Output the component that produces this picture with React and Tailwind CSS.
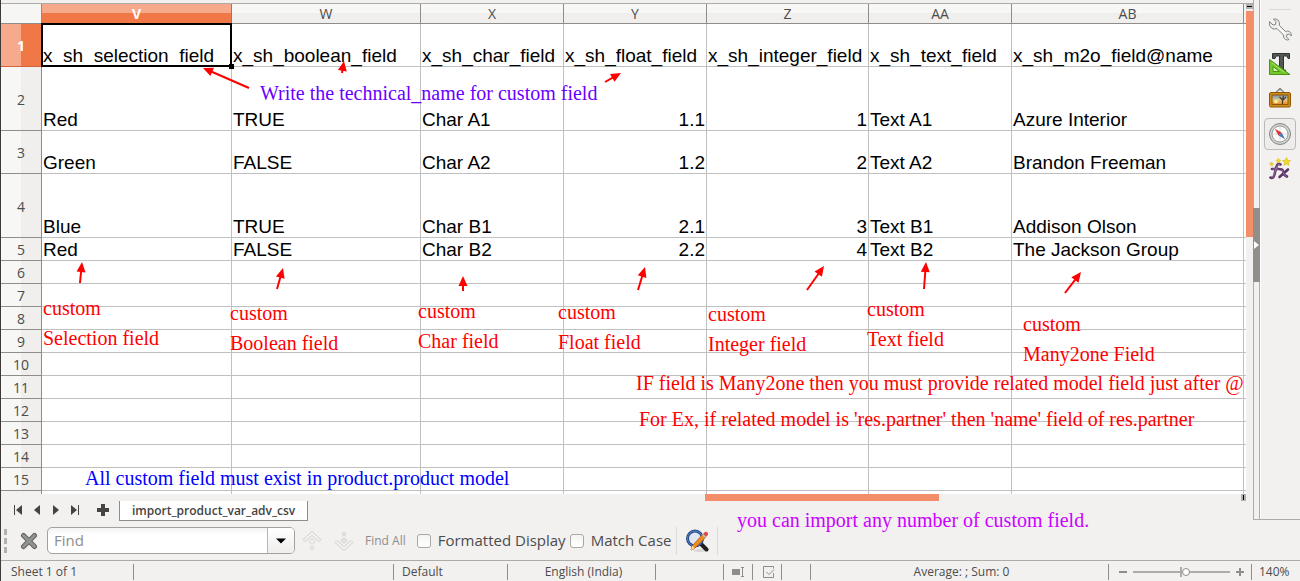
import React, { useState } from 'react';
import clsx from 'clsx';

const columns = [
  { name: 'V', width: 'w-[190px]' },
  { name: 'W', width: 'w-[189px]' },
  { name: 'X', width: 'w-[143px]' },
  { name: 'Y', width: 'w-[143px]', numeric: true },
  { name: 'Z', width: 'w-[162px]', numeric: true },
  { name: 'AA', width: 'w-[143px]' },
  { name: 'AB', width: 'w-[232px]' },
];

const rows = [
  {
    height: 'h-[43px]',
    cells: [
      'x_sh_selection_field',
      'x_sh_boolean_field',
      'x_sh_char_field',
      'x_sh_float_field',
      'x_sh_integer_field',
      'x_sh_text_field',
      'x_sh_m2o_field@name',
    ],
  },
  { height: 'h-16', cells: ['Red', 'TRUE', 'Char A1', '1.1', '1', 'Text A1', 'Azure Interior'] },
  { height: 'h-[43px]', cells: ['Green', 'FALSE', 'Char A2', '1.2', '2', 'Text A2', 'Brandon Freeman'] },
  { height: 'h-16', cells: ['Blue', 'TRUE', 'Char B1', '2.1', '3', 'Text B1', 'Addison Olson'] },
  { height: 'h-[23px]', cells: ['Red', 'FALSE', 'Char B2', '2.2', '4', 'Text B2', 'The Jackson Group'] },
  ...Array.from({ length: 10 }, () => ({ height: 'h-[23px]', cells: ['', '', '', '', '', '', ''] })),
];

// Notes pinned freely on top of the sheet
const notes = [
  { place: 'left-[260px] top-[78px]', color: 'text-[#6a00ff]', lines: ['Write the technical_name for custom field'] },
  { place: 'left-[43px] top-[293px]', color: 'text-[#ff0000]', lines: ['custom', 'Selection field'] },
  { place: 'left-[230px] top-[298px]', color: 'text-[#ff0000]', lines: ['custom', 'Boolean field'] },
  { place: 'left-[418px] top-[296px]', color: 'text-[#ff0000]', lines: ['custom', 'Char field'] },
  { place: 'left-[558px] top-[297px]', color: 'text-[#ff0000]', lines: ['custom', 'Float field'] },
  { place: 'left-[708px] top-[299px]', color: 'text-[#ff0000]', lines: ['custom', 'Integer field'] },
  { place: 'left-[867px] top-[294px]', color: 'text-[#ff0000]', lines: ['custom', 'Text field'] },
  { place: 'left-[1023px] top-[309px]', color: 'text-[#ff0000]', lines: ['custom', 'Many2one Field'] },
  {
    place: 'left-[636px] top-[368px]',
    color: 'text-[#ff0000]',
    lines: ['IF field is Many2one then you must provide related model field just after @'],
  },
  {
    place: 'left-[639px] top-[404px]',
    color: 'text-[#ff0000]',
    lines: ["For Ex, if related model is 'res.partner' then 'name' field of res.partner"],
  },
  { place: 'left-[85px] top-[463px]', color: 'text-[#0000ff]', lines: ['All custom field must exist in product.product model'] },
  { place: 'left-[737px] top-[505px]', color: 'text-[#cc00ff]', lines: ['you can import any number of custom field.'] },
];

// [tail x, tail y, tip x, tip y]
const arrows = [
  [249, 88, 203, 68],
  [342, 73, 344, 61],
  [605, 82, 621, 73],
  [80, 283, 82, 262],
  [277, 289, 283, 268],
  [463, 291, 463, 276],
  [638, 290, 645, 267],
  [807, 290, 824, 266],
  [924, 289, 926, 262],
  [1065, 293, 1081, 272],
];

function Arrow({ x1, y1, x2, y2 }) {
  const length = Math.hypot(x2 - x1, y2 - y1);
  const angle = (Math.atan2(y2 - y1, x2 - x1) * 180) / Math.PI;
  return (
    <g transform={`translate(${x1} ${y1}) rotate(${angle})`} fill="#ff0000">
      <rect x="0" y="-1" width={length - 7} height="2" />
      <path d={`M${length} 0 l-10 -4.5 v9 z`} />
    </g>
  );
}

function Annotations() {
  return (
    <div className="pointer-events-none absolute -left-px top-0 z-20">
      <svg className="max-w-none" width="1246" height="494" aria-hidden="true">
        {arrows.map(([x1, y1, x2, y2]) => (
          <Arrow key={x1} x1={x1} y1={y1} x2={x2} y2={y2} />
        ))}
      </svg>
      {notes.map((note) => (
        <div
          key={note.place}
          className={clsx(
            'absolute whitespace-nowrap font-["Liberation_Serif",serif] text-[20px] leading-[30px]',
            note.place,
            note.color
          )}
        >
          {note.lines.map((line) => (
            <p key={line}>{line}</p>
          ))}
        </div>
      ))}
    </div>
  );
}

function Sheet() {
  return (
    <div className="min-w-0 flex-1 overflow-hidden bg-white">
      <table className="w-full table-fixed border-separate border-spacing-0">
        <thead>
          <tr className="h-5">
            <th className="w-[41px] border-b border-r border-[#8f8d8a] bg-[#f6f6f5] p-0" />
            {columns.map((col, i) => (
              <th
                key={col.name}
                scope="col"
                className={clsx(
                  'border-b border-r p-0 text-[14px] leading-[19px]',
                  col.width,
                  i === 0
                    ? 'border-[#d0653b] bg-linear-to-b from-[#f7a98c] from-50% to-[#f07746] to-50% font-bold text-white'
                    : 'border-[#8f8d8a] bg-linear-to-b from-[#f7f7f5] from-50% to-[#f0efed] to-50% font-normal text-[#4c4c4c]'
                )}
              >
                {col.name}
              </th>
            ))}
            <th className="border-b border-[#8f8d8a] bg-[#f2f1f0] p-0" />
          </tr>
        </thead>
        <tbody>
          {rows.map((row, r) => (
            <tr key={r} className={row.height}>
              <th
                scope="row"
                className={clsx(
                  'border-b border-r px-0 pb-0 pt-0.5 align-middle text-[14px] leading-5',
                  r === 0
                    ? 'border-[#d0653b] bg-linear-to-r from-[#f7a98c] from-50% to-[#f07746] to-50% font-bold text-white'
                    : 'border-[#8f8d8a] bg-linear-to-r from-[#f7f7f5] from-50% to-[#f0efed] to-50% font-normal text-[#4c4c4c]'
                )}
              >
                {r + 1}
              </th>
              {row.cells.map((cell, c) => (
                <td
                  key={columns[c].name}
                  className={clsx(
                    'whitespace-nowrap border-b border-r border-[#c0c0c0] px-px py-0 align-bottom font-["Liberation_Sans",sans-serif] text-[19px] leading-5 text-black',
                    columns[c].numeric && r > 0 && 'text-right',
                    r === 0 && c === 0 && 'relative'
                  )}
                >
                  {cell}
                  {r === 0 && c === 0 && (
                    <span className="absolute -inset-px z-10 border-2 border-black">
                      <span className="absolute -bottom-1 -right-1 size-[5px] bg-black" />
                    </span>
                  )}
                </td>
              ))}
              <td className="border-b border-[#c0c0c0] p-0" />
            </tr>
          ))}
          <tr className="h-[3px]">
            <td className="border-r border-[#8f8d8a] bg-[#f2f1f0] p-0" />
            {columns.map((col) => (
              <td key={col.name} className="border-r border-[#c0c0c0] p-0" />
            ))}
            <td className="p-0" />
          </tr>
        </tbody>
      </table>
    </div>
  );
}

function VerticalScroll() {
  return (
    <div className="flex w-[7px] shrink-0 flex-col bg-[#f2f1f0]">
      <div className="flex h-[5px] items-center justify-center bg-[#b3b1ae]">
        <div className="h-px w-[5px] bg-black" />
      </div>
      <div className="mt-0.5 h-[226px] bg-[#f38e69]" />
    </div>
  );
}

const navIcons = [
  { label: 'First sheet', d: 'M1 0h1v10H1z M9 0v10L3 5z' },
  { label: 'Previous sheet', d: 'M8 0v10L2 5z' },
  { label: 'Next sheet', d: 'M2 0v10l6-5z' },
  { label: 'Last sheet', d: 'M1 0v10l6-5z M8 0h1v10H8z' },
];

function SheetTabs() {
  return (
    <div className="flex h-[27px] items-start">
      <div className="flex w-[704px] shrink-0 items-start">
        <div className="flex w-[118px] items-center pl-3 pt-2.5">
          {navIcons.map((icon) => (
            <button key={icon.label} aria-label={icon.label} className="mr-[9px] w-2.5">
              <svg width="10" height="10" viewBox="0 0 10 10" fill="#454442">
                <path d={icon.d} />
              </svg>
            </button>
          ))}
          <button aria-label="Add sheet" className="ml-2">
            <svg width="12" height="12" viewBox="0 0 12 12" fill="#454442">
              <path d="M4 0h4v4h4v4H8v4H4V8H0V4h4z" />
            </svg>
          </button>
        </div>
        <button className="mt-[7px] h-5 border border-t-0 border-[#8f8d8a] bg-white px-3 text-[12px] font-semibold leading-[19px] text-[#454442]">
          import_product_var_adv_csv
        </button>
      </div>
      <div className="flex h-[7px] flex-1">
        <div className="w-[234px] bg-[#f38e69]" />
        <div className="ml-auto mr-[7px] flex w-[5px] items-center justify-center bg-[#b3b1ae]">
          <div className="h-[5px] w-px bg-black" />
        </div>
      </div>
    </div>
  );
}

function WrenchIcon() {
  return (
    <svg width="24" height="24" viewBox="0 0 24 24">
      <path
        d="M1.5 4.5 Q0.5 9 4 11.5 Q6.500 12.500 9 11.500 L15.500 18 Q15 21 17.500 22.500 Q20 23.500 21 22.500 L18.500 20 L19 17.500 L21.500 17 L23.300 19 Q23.800 16 21.500 14.500 Q19.500 13.500 17.500 14.500 L11.500 8.500 Q12 5 10 3 Q8 1.500 5.500 2 L8 4.800 L7.500 7.500 L5 8 Z"
        fill="#eeeeec"
        stroke="#858783"
        strokeWidth="1"
        strokeLinejoin="round"
      />
      <path d="M9.500 9.500 L17 17" stroke="#fff" strokeWidth="1.200" />
    </svg>
  );
}

function StylesIcon() {
  return (
    <svg width="24" height="24" viewBox="0 0 24 24">
      <path d="M4.500 1.500h17v5h-1.500l-1-2.500h-3.500v14h2v1.500h-8V18h2V4H8L7 6.500H4.500z" fill="#555753" stroke="#2e3436" />
      <path d="M1.500 7.500v15H22z" fill="#73c62e" stroke="#4a9410" strokeLinejoin="round" />
      <path d="M5 14.500v5h6.500z" fill="#d6f5bb" stroke="#4a9410" />
      <path d="M4 11 l12.500 9.500" stroke="#a6e373" strokeWidth="1" />
    </svg>
  );
}

function GalleryIcon() {
  return (
    <svg width="24" height="24" viewBox="0 0 24 24">
      <defs>
        <linearGradient id="sunset" x1="0" y1="0" x2="0" y2="1">
          <stop offset="0" stopColor="#6f93b4" />
          <stop offset="0.5" stopColor="#d8c98d" />
          <stop offset="1" stopColor="#f08a1c" />
        </linearGradient>
      </defs>
      <path d="M8 5.500L11 2.500h2l3 3" fill="none" stroke="#888a85" strokeWidth="1.300" />
      <circle cx="12" cy="2" r="1.200" fill="#888a85" />
      <rect x="1.500" y="5.500" width="21" height="14.500" rx="1.500" fill="#d18b1b" stroke="#8f5902" />
      <rect x="4" y="8" width="16" height="9.500" fill="url(#sunset)" stroke="#8f5902" />
      <circle cx="8" cy="14.500" r="1.800" fill="#fff3a0" />
      <path d="M14.500 17v-4l-3-3M14.500 13l1-4M14.500 13.500l3.500-3.500" fill="none" stroke="#4d3a24" strokeWidth="1.200" />
    </svg>
  );
}

function NavigatorIcon() {
  return (
    <svg width="24" height="24" viewBox="0 0 24 24">
      <circle cx="12" cy="12" r="10.500" fill="#d3d4d0" stroke="#858783" />
      <circle cx="12" cy="12" r="8" fill="#fbfbfa" stroke="#9a9c98" />
      <path d="M12 5.500v13M5.500 12h13" stroke="#d7d9d5" />
      <path d="M6.800 6.800 L13.500 10.500 L10.500 13.500 Z" fill="#dc2f35" />
      <path d="M17.200 17.200 L13.500 10.500 L10.500 13.500 Z" fill="#4c76ad" />
    </svg>
  );
}

function FunctionIcon() {
  return (
    <svg width="24" height="24" viewBox="0 0 24 24">
      <g fill="none" stroke="#5c3566" strokeWidth="2.600" strokeLinecap="round">
        <path d="M2.500 20.500q3 1.500 4-3L8.500 9.500q1-3.500 4-2" />
        <path d="M4 12h7" />
        <path d="M12.500 12.500q2-1 2.800 2.500t3.700 4.500M20 12.500l-8.500 7.500" />
      </g>
      <g fill="none" stroke="#9672a5" strokeWidth="0.900">
        <path d="M3.500 20.500q2 0.500 3-3.500L8.700 9.500q1-3 3-2M4.500 12h6" />
        <path d="M12.800 12.800q1.800 0 2.500 2.700t3.200 4" />
      </g>
      <g fill="#f4d928" stroke="#cfae12" strokeWidth="0.500">
        <path d="M18.500 0.500l1.200 2.700 2.900.3-2.200 2 .6 2.900-2.500-1.500-2.600 1.500.6-2.900-2.100-2 2.900-.3z" />
        <path d="M10.500 1.500l.8 1.500 1.600.3-1.200 1.200.2 1.600-1.400-.8-1.500.8.300-1.600-1.200-1.200 1.600-.3z" />
        <path d="M3.500 5l.6 1.200 1.300.2-1 1 .2 1.300-1.100-.6-1.200.6.300-1.300-1-1 1.300-.2z" />
      </g>
    </svg>
  );
}

const sidebarItems = [
  { label: 'Properties', Icon: WrenchIcon },
  { label: 'Styles and Formatting', Icon: StylesIcon },
  { label: 'Gallery', Icon: GalleryIcon },
  { label: 'Navigator', Icon: NavigatorIcon, active: true },
  { label: 'Functions', Icon: FunctionIcon },
];

function Sidebar() {
  return (
    <aside className="mb-px flex shrink-0 border-b border-[#aeaca9]">
      <div className="w-[7px] border-x border-[#aeaca9]">
        <button
          aria-label="Hide sidebar"
          className="-mx-px mt-52 flex h-[74px] w-[7px] items-center justify-center bg-[#928f8a]"
        >
          <svg width="5" height="8" viewBox="0 0 5 8" fill="#fff">
            <path d="M0 0v8l5-4z" />
          </svg>
        </button>
      </div>
      <div className="flex w-10 flex-col items-center gap-[3px] border-l border-white pr-0.5 pt-[9px]">
        <hr className="w-[22px] border-[#dcdad7]" />
        {sidebarItems.map(({ label, Icon, active }) => (
          <button
            key={label}
            aria-label={label}
            className={clsx(
              'flex size-8 items-center justify-center rounded border',
              active ? 'border-[#bcbab7] bg-[#eeedeb]' : 'border-transparent'
            )}
          >
            <Icon />
          </button>
        ))}
      </div>
    </aside>
  );
}

function FindCheckbox({ label }) {
  return (
    <label className="flex items-center gap-[7px] text-[15px] text-[#4c4c4c]">
      <input
        type="checkbox"
        className="size-3.5 appearance-none rounded-[3px] border border-[#aaa8a5] bg-linear-to-b from-[#f4f4f3] to-white checked:bg-[#f07746]"
      />
      {label}
    </label>
  );
}

function FindBar() {
  return (
    <div className="flex h-[39px] items-center pl-[3px]">
      <div className="h-6 border-l-[3px] border-dashed border-[#b3b1ae]" />
      <button aria-label="Close find bar" className="ml-[13px]">
        <svg width="18" height="18" viewBox="0 0 18 18" strokeLinecap="round">
          <path d="M3.500 3.500l11 11M14.500 3.500l-11 11" stroke="#62635f" strokeWidth="5" />
          <path d="M3.500 3.500l11 11M14.500 3.500l-11 11" stroke="#92948f" strokeWidth="3" />
        </svg>
      </button>
      <div className="ml-[9px] flex h-[27px] w-[248px] overflow-hidden rounded-[5px] border border-[#a3a19e] bg-linear-to-b from-[#f4f4f3] to-white to-30%">
        <input
          type="text"
          aria-label="Find"
          placeholder="Find"
          className="min-w-0 flex-1 bg-transparent px-1.5 text-[15px] text-[#4c4c4c] outline-none placeholder:text-[#8e8d8b]"
        />
        <button
          aria-label="Search history"
          className="flex w-[27px] items-center justify-center border-l border-[#b9b7b4] bg-linear-to-b from-white to-[#efeeed]"
        >
          <svg width="10" height="6" viewBox="0 0 10 6">
            <path d="M0 0.500h10L5 5.500z" />
          </svg>
        </button>
      </div>
      <button aria-label="Find previous" className="ml-[7px]">
        <svg width="20" height="20" viewBox="0 0 20 20" fill="none" stroke="#d3d1ce">
          <path d="M10 0.500l9 8-2 2-7-6-7 6-2-2z" />
          <path d="M10 7.500l3 3-3 3-3-3zM10 15l2 2-2 2-2-2z" />
        </svg>
      </button>
      <button aria-label="Find next" className="ml-3">
        <svg width="20" height="20" viewBox="0 0 20 20" fill="none" stroke="#d3d1ce">
          <path d="M10 19.500l9-8-2-2-7 6-7-6-2 2z" />
          <path d="M10 12.500l3-3-3-3-3 3zM10 5l2-2-2-2-2 2z" fill="#e4e3e1" />
        </svg>
      </button>
      <button className="mx-[11px] text-[12px] text-[#8e8d8b]">Find All</button>
      <FindCheckbox label="Formatted Display" />
      <div className="ml-1">
        <FindCheckbox label="Match Case" />
      </div>
      <div className="ml-[5px] flex h-7 items-center border-x border-[#dcdad7] px-2">
        <button aria-label="Find and Replace">
          <svg width="24" height="24" viewBox="0 0 24 24">
            <ellipse cx="15" cy="21.500" rx="7" ry="1.500" fill="#d8d7d5" />
            <path d="M16 15l5.500 5.500" stroke="#1f2021" strokeWidth="4" strokeLinecap="round" />
            <circle cx="10" cy="9.500" r="7.500" fill="#dfe8f2" stroke="#24478a" strokeWidth="3" />
            <circle cx="10" cy="9.500" r="7.500" fill="none" stroke="#5f86c4" />
            <path d="M6 21l1.500-4.500L18 5l3 3L9.500 19.500z" fill="#f28a1e" stroke="#a85a0c" strokeWidth="0.800" />
            <path d="M6 21l1.500-4.500 2 3z" fill="#f5deb0" />
            <path d="M18 5l2-2q1-.8 2.300.4T22.800 6L21 8z" fill="#e54343" />
            <path d="M17 6l1.200-1.300 3.100 3L20 9z" fill="#babdb6" />
          </svg>
        </button>
      </div>
    </div>
  );
}

function StatusBar() {
  const [zoom, setZoom] = useState(56);
  return (
    <footer className="flex h-[21px] items-center border-t border-[#aeaca9] pt-px text-[12px] leading-4 text-[#4c4c4c] [&>*]:h-4 [&>*]:border-r [&>*]:border-[#8f8d8a]">
      <div className="w-[133px] pl-2.5">Sheet 1 of 1</div>
      <div className="w-[260px]" />
      <div className="w-[114px] pl-2">Default</div>
      <div className="w-[148px] pl-1 text-center">English (India)</div>
      <div className="w-[68px]" />
      <div className="flex w-[29px] items-center justify-center">
        <svg width="13" height="10" viewBox="0 0 13 10">
          <path d="M0 2h8v6H0z" fill="#8f8d8a" />
          <path d="M9 .5h3M9 9.500h3M10.500 .5v9" stroke="#8f8d8a" />
        </svg>
      </div>
      <div className="flex w-[29px] items-center justify-center pl-1">
        <svg width="12" height="12" viewBox="0 0 12 12" fill="none" stroke="#8f8d8a">
          <path d="M10.500 7v4.500h-10v-11h10v2" />
          <path d="M3.500 6l2.500 2.500 5-5" />
        </svg>
      </div>
      <div className="w-[29px]" />
      <div className="flex-1 pl-1 text-center">Average: ; Sum: 0</div>
      <div className="flex w-[143px] items-center justify-center gap-1.5 pl-0.5">
        <button aria-label="Zoom out" className="h-0.5 w-2 bg-[#8f8d8a]" onClick={() => setZoom(Math.max(0, zoom - 5))} />
        <input
          type="range"
          aria-label="Zoom"
          value={zoom}
          onChange={(e) => setZoom(Number(e.target.value))}
          className="h-2.5 w-[97px] appearance-none bg-[linear-gradient(#aeaca9,#aeaca9),linear-gradient(#aeaca9,#aeaca9)] bg-[size:100%_2px,2px_10px] bg-center bg-no-repeat [&::-webkit-slider-thumb]:size-2 [&::-webkit-slider-thumb]:appearance-none [&::-webkit-slider-thumb]:rounded-full [&::-webkit-slider-thumb]:border [&::-webkit-slider-thumb]:border-[#8f8d8a] [&::-webkit-slider-thumb]:bg-white"
        />
        <button aria-label="Zoom in" onClick={() => setZoom(Math.min(100, zoom + 5))}>
          <svg width="8" height="8" viewBox="0 0 8 8" fill="#8f8d8a">
            <path d="M3 0h2v3h3v2H5v3H3V5H0V3h3z" />
          </svg>
        </button>
      </div>
      <div className="w-12 border-r-0! pl-[7px]">140%</div>
    </footer>
  );
}

export default function App() {
  return (
    <main className='relative min-h-screen overflow-hidden border-l border-[#3c3b37] bg-[#f2f1f0] font-["Open_Sans","Noto_Sans",sans-serif]'>
      <div className="flex">
        <div className="min-w-0 flex-1 pt-[3px]">
          <div className="flex border-t border-[#aeaca9]">
            <Sheet />
            <VerticalScroll />
          </div>
          <SheetTabs />
        </div>
        <Sidebar />
      </div>
      <FindBar />
      <StatusBar />
      <Annotations />
    </main>
  );
}
